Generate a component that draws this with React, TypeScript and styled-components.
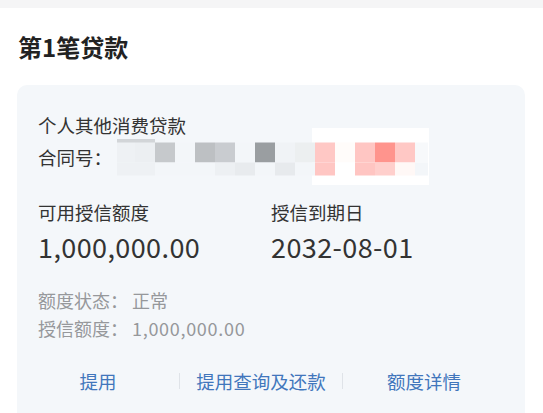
import React from 'react';
import styled, { createGlobalStyle } from 'styled-components';

const GlobalStyle = createGlobalStyle`
  * { box-sizing: border-box; }
  body {
    margin: 0;
    background: #fff;
    font-family: "Noto Sans CJK SC", "Noto Sans", sans-serif;
    color: #333;
  }
`;

const TopStrip = styled.div`
  height: 8px;
  background: #f5f5f6;
`;

const Page = styled.main`
  padding: 23px 18px 0 17px;
`;

const Title = styled.h2`
  margin: 0 0 0 1px;
  font-size: 24px;
  line-height: 32px;
  font-weight: 700;
  color: #222;
`;

const Card = styled.section`
  margin-top: 22px;
  background: #f4f7fa;
  border-radius: 10px;
  padding: 27px 0 20px 21px;
`;

const Line = styled.div`
  font-size: 18.5px;
  line-height: 26px;
  color: #333;
`;

const ContractRow = styled.div`
  margin-top: 6px;
  display: flex;
  align-items: center;
  font-size: 18.5px;
  line-height: 26px;
  color: #333;
`;

const Mosaic = styled.svg`
  display: block;
  margin: -16px 0 -15px 5px;
`;

const Grid = styled.div`
  margin-top: 29px;
  display: grid;
  grid-template-columns: 233px 1fr;
`;

const Label = styled.div`
  font-size: 18.5px;
  line-height: 26px;
  color: #333;
`;

const Value = styled.div`
  margin-top: 5px;
  font-size: 27px;
  line-height: 34px;
  letter-spacing: 0.4px;
  color: #333;
`;

const Meta = styled.div`
  margin-top: 22px;
`;

const MetaLine = styled.div`
  display: flex;
  font-size: 18px;
  line-height: 28px;
  color: #96989b;
`;

const MetaValue = styled.span<{ $numeric?: boolean }>`
  margin-left: 4px;
  letter-spacing: ${(p) => (p.$numeric ? '0.7px' : '0')};
`;

const Actions = styled.nav`
  margin: 17px 20px 0 -21px;
  display: flex;
  align-items: center;
  height: 44px;
`;

const Action = styled.a`
  flex: 1;
  text-align: center;
  font-size: 18.5px;
  line-height: 26px;
  color: #4176bc;
  text-decoration: none;
`;

const Divider = styled.span`
  width: 1px;
  height: 16px;
  background: #dfe3e8;
`;

const mainRow = [
  '#eef1f4', '#eceff2', '#c6c9cc', '#f3f6f9', '#bdc0c3', '#c9ccd0', '#f3f6f9', '#9a9ea1',
  '#f0f3f6', '#eceff0', '#ffc8c5', '#fffcfa', '#ffc6c3', '#ff948d', '#ffc8c5', '#f7f9fb',
];
const lowRow = [
  '#eef1f4', '#eef1f4', '#f3f6f9', '#f3f6f9', '#f3f6f9', '#edf0f3', '#e8ebee', '#f3f6f9',
  '#e7eaed', '#f3f6f9', '#ffc6c3', '#ffffff', '#ffc5c2', '#ffcfcc', '#fff8f6', '#f3f6f9',
];

const colX = (i: number) => (i === 0 ? 0 : 18 + 20 * (i - 1));
const colW = (i: number) => (i === 0 ? 18 : i === 15 ? 13 : 20);

const MaskedNumber: React.FC = () => (
  <Mosaic width={313} height={57} viewBox="0 0 313 57">
    <rect x={195} y={0} width={117} height={57} fill="#ffffff" />
    <rect x={0} y={11} width={38} height={4} fill="#d2d5d8" />
    {mainRow.map((c, i) => (
      <rect key={`m${i}`} x={colX(i)} y={14.5} width={colW(i)} height={20} fill={c} />
    ))}
    {lowRow.map((c, i) => (
      <rect key={`l${i}`} x={colX(i)} y={34.5} width={colW(i)} height={13} fill={c} />
    ))}
  </Mosaic>
);

const App: React.FC = () => (
  <>
    <GlobalStyle />
    <TopStrip />
    <Page>
      <Title>第1笔贷款</Title>
      <Card>
        <Line>个人其他消费贷款</Line>
        <ContractRow>
          合同号：
          <MaskedNumber />
        </ContractRow>
        <Grid>
          <div>
            <Label>可用授信额度</Label>
            <Value>1,000,000.00</Value>
          </div>
          <div>
            <Label>授信到期日</Label>
            <Value>2032-08-01</Value>
          </div>
        </Grid>
        <Meta>
          <MetaLine>
            额度状态：<MetaValue>正常</MetaValue>
          </MetaLine>
          <MetaLine>
            授信额度：<MetaValue $numeric>1,000,000.00</MetaValue>
          </MetaLine>
        </Meta>
        <Actions>
          <Action href="#">提用</Action>
          <Divider />
          <Action href="#">提用查询及还款</Action>
          <Divider />
          <Action href="#">额度详情</Action>
        </Actions>
      </Card>
    </Page>
  </>
);

export default App;
